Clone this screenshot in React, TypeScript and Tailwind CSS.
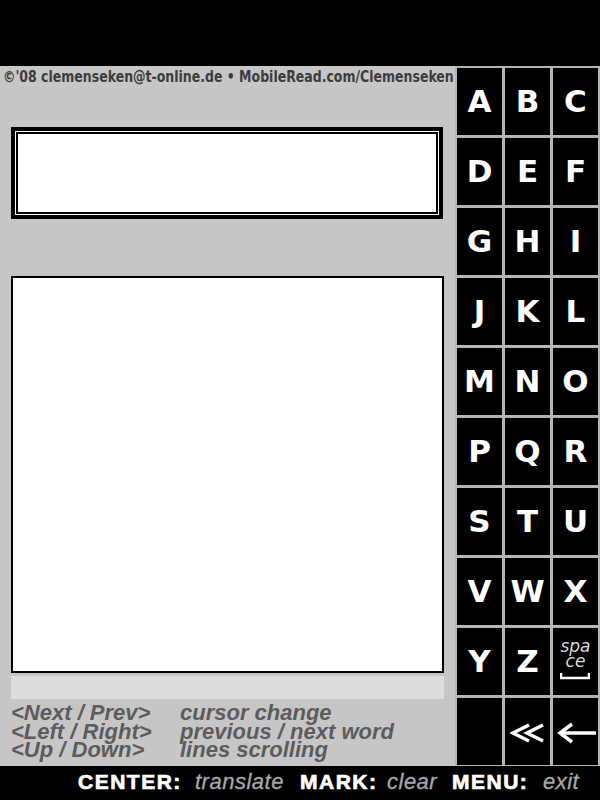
import React from "react";

const rows: string[][] = [
  ["A", "B", "C"],
  ["D", "E", "F"],
  ["G", "H", "I"],
  ["J", "K", "L"],
  ["M", "N", "O"],
  ["P", "Q", "R"],
  ["S", "T", "U"],
  ["V", "W", "X"],
  ["Y", "Z", "space"],
  ["", "back2", "back"],
];

function Key({ k }: { k: string }) {
  let content: React.ReactNode = null;
  if (k === "space") {
    content = (
      <div className="flex flex-col items-center pb-[4px]">
        <span className="italic text-[17px] leading-[15px] text-[#d8d8d8] font-['DejaVu_Sans',sans-serif]">spa</span>
        <span className="italic text-[17px] leading-[15px] text-[#d8d8d8] font-['DejaVu_Sans',sans-serif]">ce</span>
        <svg width="30" height="8" viewBox="0 0 30 8" className="mt-[3px]">
          <path d="M1 1 V6 H29 V1" fill="none" stroke="white" strokeWidth="2.5" />
        </svg>
      </div>
    );
  } else if (k === "back2") {
    content = (
      <svg width="36" height="20" viewBox="0 0 36 20" className="mt-[2px]">
        <polyline points="19,2 3,10 19,18" fill="none" stroke="white" strokeWidth="3.5" />
        <polyline points="33,2 17,10 33,18" fill="none" stroke="white" strokeWidth="3.5" />
      </svg>
    );
  } else if (k === "back") {
    content = (
      <svg width="40" height="22" viewBox="0 0 40 22" className="ml-[2px] mt-[2px]">
        <line x1="3" y1="11" x2="39" y2="11" stroke="white" strokeWidth="3.5" />
        <polyline points="15,2 3,11 15,20" fill="none" stroke="white" strokeWidth="3.5" />
      </svg>
    );
  } else if (k) {
    content = (
      <span className="text-white font-bold text-[31px] leading-none font-['DejaVu_Sans',sans-serif]">{k}</span>
    );
  }
  return <div className="bg-black flex items-center justify-center">{content}</div>;
}

export default function App() {
  return (
    <div className="w-[600px] h-[800px] flex flex-col bg-black overflow-hidden">
      <div className="h-[66px] bg-black" />
      <div className="h-[700px] flex bg-[#c6c6c6]">
        <div className="w-[455px] flex flex-col">
          <div className="h-[22px] pl-[3px] flex items-center whitespace-nowrap">
            <span className="origin-left scale-x-[0.782] inline-block font-bold text-[16px] text-[#3c3c3c] font-['DejaVu_Sans',sans-serif]">
              ©'08 clemenseken@t-online.de • MobileRead.com/Clemenseken
            </span>
          </div>
          <div className="ml-[11px] mt-[39px] w-[432px] h-[92px] border-4 border-black bg-white p-px">
            <div className="w-full h-full border-2 border-black bg-white" />
          </div>
          <div className="ml-[11px] mt-[57px] w-[433px] h-[397px] border-2 border-black bg-white" />
          <div className="ml-[11px] mt-[3px] w-[433px] h-[23px] bg-[#dcdcdc]" />
          <div className="ml-[11px] mt-[5px] flex text-[22px] leading-[18.5px] font-bold italic text-[#5c5c5c] font-['Liberation_Sans',Arial,sans-serif] whitespace-nowrap">
            <div className="w-[169px] flex flex-col">
              <span>&lt;Next / Prev&gt;</span>
              <span>&lt;Left / Right&gt;</span>
              <span>&lt;Up / Down&gt;</span>
            </div>
            <div className="flex flex-col">
              <span>cursor change</span>
              <span>previous / next word</span>
              <span>lines scrolling</span>
            </div>
          </div>
        </div>
        <div className="w-[145px] bg-[#b4b4b4] pt-[2px] pl-[2px] pr-[2px] pb-[1px] grid grid-cols-[45px_45px_45px] grid-rows-[repeat(10,67px)] gap-[3px]">
          {rows.flat().map((k, i) => (
            <Key key={i} k={k} />
          ))}
        </div>
      </div>
      <div className="h-[34px] bg-black flex items-center pl-[78px] pb-[3px] whitespace-nowrap font-['Liberation_Sans',Arial,sans-serif] text-[21px]">
        <span className="w-[117px] font-bold text-white tracking-[1.5px] [-webkit-text-stroke:0.7px_white]">CENTER:</span>
        <span className="w-[105px] italic text-[#a8a8a8] text-[22px] tracking-[0.5px] [-webkit-text-stroke:0.3px_#a8a8a8]">translate</span>
        <span className="w-[87px] font-bold text-white tracking-[1.5px] [-webkit-text-stroke:0.7px_white]">MARK:</span>
        <span className="w-[65px] italic text-[#a8a8a8] text-[22px] tracking-[0.5px] [-webkit-text-stroke:0.3px_#a8a8a8]">clear</span>
        <span className="w-[91px] font-bold text-white tracking-[1.5px] [-webkit-text-stroke:0.7px_white]">MENU:</span>
        <span className="italic text-[#a8a8a8] text-[22px] tracking-[0.5px] [-webkit-text-stroke:0.3px_#a8a8a8]">exit</span>
      </div>
    </div>
  );
}
